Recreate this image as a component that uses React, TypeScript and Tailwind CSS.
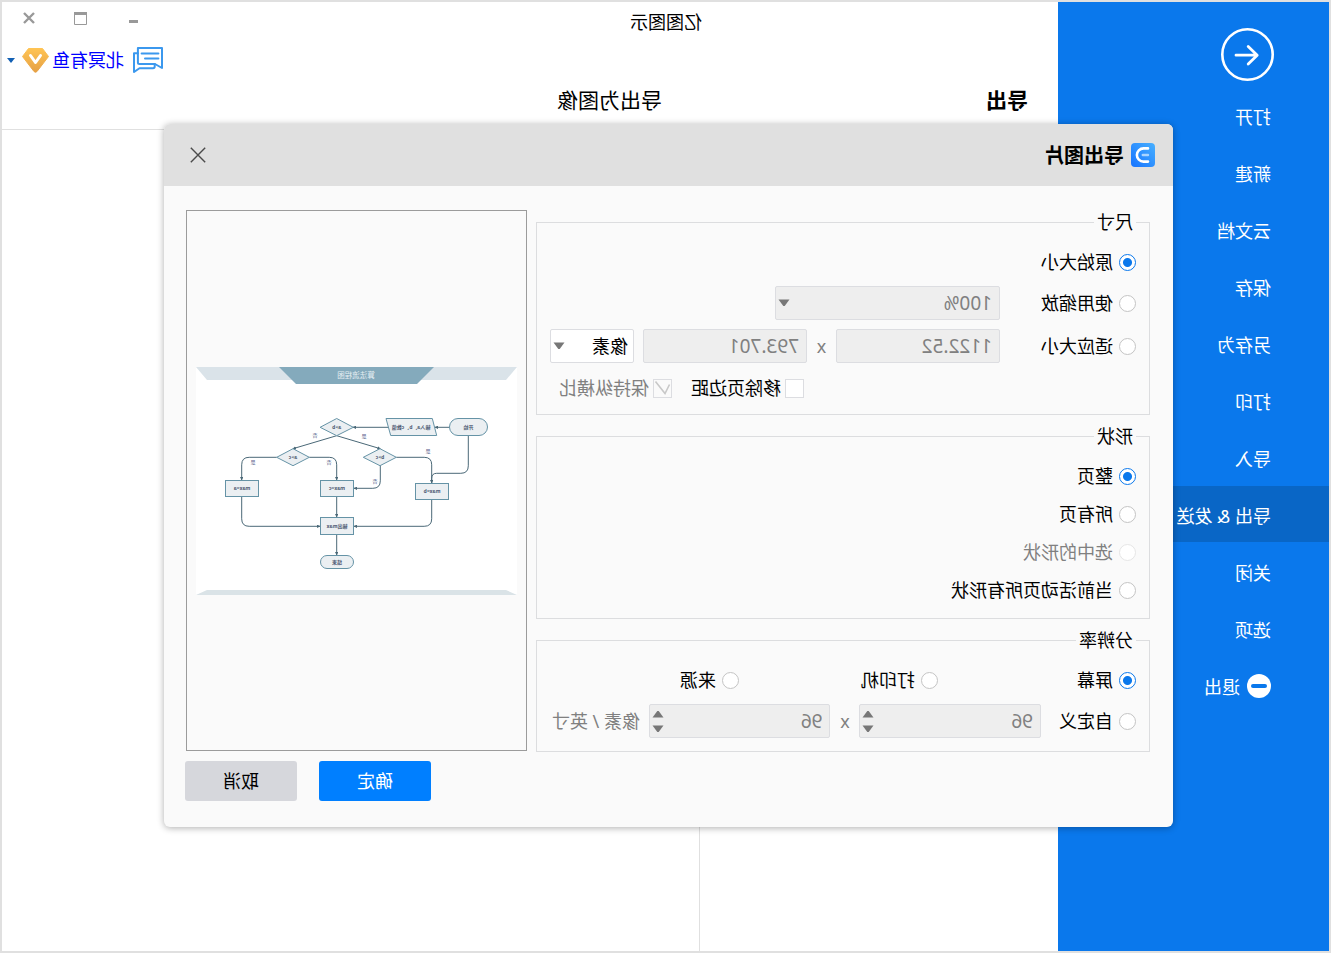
import React from "react";

const menuItems = ["打开", "新建", "云文档", "保存", "另存为", "打印", "导入", "导出 & 发送", "关闭", "选项"];
const activeItem = "导出 & 发送";

const fieldClass =
  "h-[34px] w-full min-w-0 appearance-none rounded-[2px] border border-[#dcdde1] bg-white text-black disabled:bg-[#eeeeee] disabled:text-[#808080] disabled:opacity-100";

function Triangle({ up = false }: { up?: boolean }) {
  return (
    <svg width="12" height="8" viewBox="0 0 12 8" aria-hidden="true">
      <path d={up ? "M0.5 7.5 5.3 0.9h1.4l4.8 6.6z" : "M0.5 0.5h11L6.7 7.1H5.3z"} fill="#777777" />
    </svg>
  );
}

type RadioProps = { name: string; label: string; checked?: boolean; disabled?: boolean };

function Radio({ name, label, checked, disabled }: RadioProps) {
  return (
    <label className={disabled ? "flex items-center gap-[6px] text-[#808080]" : "flex items-center gap-[6px]"}>
      <input
        type="radio"
        name={name}
        defaultChecked={checked}
        disabled={disabled}
        className="size-[17px] shrink-0 appearance-none rounded-full border border-[#c4c4c4] bg-white checked:border-[#0a78ec] checked:bg-[radial-gradient(circle,#0a78ec_4px,#ffffff_5px)] disabled:border-[#e6e6e6]"
      />
      <span className="whitespace-nowrap">{label}</span>
    </label>
  );
}

function Checkbox({ label, checked, disabled }: { label: string; checked?: boolean; disabled?: boolean }) {
  return (
    <label className={disabled ? "flex items-center gap-1 text-[#808080]" : "flex items-center gap-1"}>
      <span className="relative flex">
        <input
          type="checkbox"
          defaultChecked={checked}
          disabled={disabled}
          className="size-[19px] appearance-none border border-[#dcdde1] bg-white disabled:bg-[#fafafa]"
        />
        {checked && (
          <svg className="absolute inset-0" width="19" height="19" viewBox="0 0 19 19" aria-hidden="true">
            <path d="M2.5 5.5 7 14.5 16.5 2.5" fill="none" stroke="#c8c8c8" strokeWidth="1.6" />
          </svg>
        )}
      </span>
      <span className="whitespace-nowrap">{label}</span>
    </label>
  );
}

function Select({ label, value, disabled, className }: { label: string; value: string; disabled?: boolean; className: string }) {
  return (
    <div className="relative">
      <select aria-label={label} disabled={disabled} defaultValue={value} className={`${fieldClass} ${className}`}>
        <option>{value}</option>
      </select>
      <span className="pointer-events-none absolute inset-y-0 right-[3px] flex items-center">
        <Triangle />
      </span>
    </div>
  );
}

function Spinner({ label, value }: { label: string; value: string }) {
  return (
    <div className="relative min-w-0 flex-1">
      <input aria-label={label} disabled defaultValue={value} className={`${fieldClass} px-[7px] text-[19px]`} />
      <span className="absolute inset-y-0 right-[3px] flex flex-col items-center justify-center gap-[7px]">
        <button type="button" disabled aria-label="增加" className="flex">
          <Triangle up />
        </button>
        <button type="button" disabled aria-label="减少" className="flex">
          <Triangle />
        </button>
      </span>
    </div>
  );
}

function Group({ title, className, children }: { title: string; className: string; children: React.ReactNode }) {
  return (
    <fieldset className={`min-w-0 border border-[#dcdddf] px-[13px] ${className}`}>
      <legend className="h-[25px] px-[3px] leading-6">{title}</legend>
      {children}
    </fieldset>
  );
}

function Flowchart() {
  return (
    <svg viewBox="0 0 321 228" className="w-[321px] max-w-full" role="img" aria-label="算法流程图">
      <defs>
        <marker id="tip" viewBox="0 0 4 4" refX="3.5" refY="2" markerWidth="3.4" markerHeight="3.4" markerUnits="userSpaceOnUse" orient="auto">
          <path d="M0 0 4 2 0 4z" fill="#4a6877" />
        </marker>
      </defs>
      <rect width="321" height="228" fill="#ffffff" />
      <path d="M0 0H321L310 13H11z" fill="#dae3e9" />
      <path d="M83 0H238L221 17H100z" fill="#84aabc" />
      <path d="M11 223H310L321 228H0z" fill="#dae3e7" />
      <g fill="none" stroke="#4a6877" strokeWidth="1">
        <path d="M67.7 60.3H82" markerEnd="url(#tip)" />
        <path d="M128.7 60.3H164" markerEnd="url(#tip)" />
        <path d="M180.3 68.7 224 81.7" markerEnd="url(#tip)" />
        <path d="M180.3 68.7 136.7 81.7" markerEnd="url(#tip)" />
        <path d="M240.3 90.3H267.8Q275.3 90.3 275.3 97.8V113" markerEnd="url(#tip)" />
        <path d="M207.7 90.3H187.8Q180.3 90.3 180.3 97.8V113" markerEnd="url(#tip)" />
        <path d="M136.7 98.7V113.8Q136.7 121.3 144.2 121.3H163" markerEnd="url(#tip)" />
        <path d="M120.7 90.3H92.8Q85.3 90.3 85.3 97.8V116" markerEnd="url(#tip)" />
        <path d="M48.7 68.7V98.8Q48.7 106.3 56.2 106.3H80.3Q85.3 106.3 85.3 111.3V116" />
        <path d="M85.3 132.3V151.8Q85.3 159.3 92.8 159.3H163" markerEnd="url(#tip)" />
        <path d="M275.3 129.3V151.8Q275.3 159.3 267.8 159.3H197" markerEnd="url(#tip)" />
        <path d="M180.3 129.3V150" markerEnd="url(#tip)" />
        <path d="M180.3 167.3V188" markerEnd="url(#tip)" />
      </g>
      <g fill="#ebeff2" stroke="#6593a6" strokeWidth="1">
        <rect x="29.5" y="51.5" width="38" height="17" rx="8.5" />
        <path d="M84.7 51.5H131L126.3 68.5H80.3z" />
        <path d="M163.7 60.3 180.3 51.5 196.9 60.3 180.3 68.7z" />
        <path d="M207.7 90.3 224 81.7 240.3 90.3 224 98.7z" />
        <path d="M120.7 90.3 137 81.7 153.7 90.3 137 98.7z" />
        <rect x="258.5" y="113.5" width="33" height="16" />
        <rect x="163.5" y="113.5" width="33" height="16" />
        <rect x="68.5" y="116.5" width="33" height="16" />
        <rect x="163.5" y="150.5" width="33" height="17" />
        <rect x="163.5" y="188.5" width="33" height="13" rx="6.5" />
      </g>
      <text x="161" y="11" textAnchor="middle" fontSize="7.5" fill="#e4eef2">算法流程图</text>
      <g fontSize="5" fontWeight="700" textAnchor="middle" fill="#4d5a72">
        <text x="48.5" y="62">开始</text>
        <text x="106" y="62">输入a、b、c数值</text>
        <text x="180.3" y="62">a&gt;b</text>
        <text x="224" y="92">a&gt;c</text>
        <text x="137" y="92">b&gt;c</text>
        <text x="275" y="123">max=a</text>
        <text x="180" y="123">max=c</text>
        <text x="85" y="126">max=b</text>
        <text x="180" y="161">输出max</text>
        <text x="180" y="197">结束</text>
      </g>
      <g fontSize="5" textAnchor="middle" fill="#56608a">
        <text x="202" y="70">否</text>
        <text x="153" y="71">是</text>
        <text x="264" y="97">是</text>
        <text x="188" y="97">否</text>
        <text x="89" y="86">是</text>
        <text x="142" y="116">否</text>
      </g>
    </svg>
  );
}

function ExportDialog() {
  return (
    <div
      role="dialog"
      aria-label="导出图片"
      className="w-full max-w-[1009px] overflow-hidden rounded-[6px] bg-[#fafafa] shadow-[0_1px_7px_rgba(0,0,0,0.32)]"
    >
      <header className="flex h-[62px] items-center gap-[7px] bg-[#e0e0e0] pl-[18px] pr-6">
        <svg width="24" height="24" viewBox="0 0 24 24" aria-hidden="true">
          <defs>
            <linearGradient id="tile" x1="0" y1="0" x2="1" y2="1">
              <stop offset="0" stopColor="#48b0ff" />
              <stop offset="1" stopColor="#1673ff" />
            </linearGradient>
          </defs>
          <rect width="24" height="24" rx="4" fill="url(#tile)" />
          <path d="M7 12H12.2" stroke="#a9d4ff" strokeWidth="2.4" strokeLinecap="round" />
          <path d="M7 5.4H11.5A6.6 6.6 0 0 1 11.5 18.6H7" fill="none" stroke="#ffffff" strokeWidth="2.6" strokeLinecap="round" />
        </svg>
        <h2 className="flex-1 pt-[2px] text-[20px] leading-7 font-bold">导出图片</h2>
        <button type="button" aria-label="关闭对话框" className="flex size-5 items-center justify-center">
          <svg width="16" height="16" viewBox="0 0 16 16" aria-hidden="true">
            <path d="M0.8 0.8 15.2 15.2M15.2 0.8 0.8 15.2" stroke="#4a4a4a" strokeWidth="1.4" />
          </svg>
        </button>
      </header>

      <div className="flex gap-[9px] pt-6 pr-[22px] pl-[23px]">
        <div className="flex min-w-0 flex-1 flex-col gap-[9px]">
          <Group title="尺寸" className="pt-[11px] pb-[14px]">
            <div className="flex h-8 items-center">
              <Radio name="size" label="原始大小" checked />
            </div>
            <div className="mt-2 flex items-center">
              <div className="w-[136px]">
                <Radio name="size" label="使用缩放" />
              </div>
              <div className="w-[225px]">
                <Select label="缩放比例" value="100%" disabled className="px-[7px] text-[19px]" />
              </div>
            </div>
            <div className="mt-[9px] flex items-center">
              <div className="w-[136px] shrink-0">
                <Radio name="size" label="适应大小" />
              </div>
              <input aria-label="宽度" disabled defaultValue="1122.52" className={`${fieldClass} flex-1 px-[7px] text-[19px]`} />
              <span className="w-[29px] shrink-0 text-center text-[#808080]">x</span>
              <input aria-label="高度" disabled defaultValue="793.701" className={`${fieldClass} flex-1 px-[7px] text-[19px]`} />
              <div className="ml-[9px] w-[84px] shrink-0">
                <Select label="单位" value="像素" className="px-[5px] text-[18px]" />
              </div>
            </div>
            <div className="mt-[13px] flex h-6 items-center justify-end gap-[19px] pr-[9px]">
              <Checkbox label="移除页边距" />
              <Checkbox label="保持纵横比" checked disabled />
            </div>
          </Group>

          <Group title="形状" className="pt-2 pb-[9px]">
            <div className="flex h-[38px] items-center">
              <Radio name="shape" label="整页" checked />
            </div>
            <div className="flex h-[38px] items-center">
              <Radio name="shape" label="所有页" />
            </div>
            <div className="flex h-[38px] items-center">
              <Radio name="shape" label="选中的形状" disabled />
            </div>
            <div className="flex h-[38px] items-center">
              <Radio name="shape" label="当前活动页所有形状" />
            </div>
          </Group>

          <Group title="分辨率" className="pt-[11px] pb-[13px]">
            <div className="grid h-8 grid-cols-[198px_199px_1fr] items-center">
              <Radio name="resolution" label="屏幕" checked />
              <Radio name="resolution" label="打印机" />
              <Radio name="resolution" label="来源" />
            </div>
            <div className="mt-2 flex items-center">
              <div className="w-[95px] shrink-0">
                <Radio name="resolution" label="自定义" />
              </div>
              <Spinner label="水平分辨率" value="96" />
              <span className="w-[29px] shrink-0 text-center text-[#808080]">x</span>
              <Spinner label="垂直分辨率" value="96" />
              <span className="ml-[9px] w-[90px] shrink-0 whitespace-nowrap text-[#808080]">像素 / 英寸</span>
            </div>
          </Group>
        </div>

        <div className="mb-px flex w-[341px] shrink-0 items-center justify-center border border-[#9b9b9b]">
          <Flowchart />
        </div>
      </div>

      <div className="flex justify-end gap-[22px] pt-[9px] pr-[21px] pb-[26px]">
        <button type="button" className="h-10 w-28 rounded-[3px] bg-[#007fff] text-white">
          确定
        </button>
        <button type="button" className="h-10 w-28 rounded-[3px] bg-[#d6d7dc]">
          取消
        </button>
      </div>
    </div>
  );
}

function Sidebar() {
  return (
    <nav className="w-[271px] shrink-0 bg-[#0a78ec] pt-[26px] text-white">
      <button type="button" aria-label="返回" className="ml-[55px] flex">
        <svg width="53" height="53" viewBox="0 0 53 53" fill="none" stroke="#ffffff" strokeLinecap="round" aria-hidden="true">
          <circle cx="26.5" cy="26.5" r="25.2" strokeWidth="2.6" />
          <path d="M38 27.2H17M25.8 18.5 16.8 27.2 25.8 36" strokeWidth="2.8" strokeLinejoin="round" />
        </svg>
      </button>
      <ul className="mt-[6px] flex flex-col gap-px">
        {menuItems.map((item) => (
          <li key={item}>
            <a
              href="#"
              className={
                item === activeItem
                  ? "flex h-14 items-center bg-[#0966c6] pt-[3px] pl-[58px]"
                  : "flex h-14 items-center pt-[3px] pl-[58px]"
              }
            >
              {item}
            </a>
          </li>
        ))}
        <li>
          <a href="#" className="flex h-14 items-center gap-[7px] pt-[2px] pl-[58px]">
            <svg width="24" height="24" viewBox="0 0 24 24" aria-hidden="true">
              <circle cx="12" cy="12" r="12" fill="#ffffff" />
              <rect x="4" y="10" width="16" height="4" rx="2" fill="#0a78ec" />
            </svg>
            <span className="pt-px">退出</span>
          </a>
        </li>
      </ul>
    </nav>
  );
}

function WindowBar() {
  return (
    <div className="flex h-10 justify-between">
      <h1 className="pl-[356px] leading-10">亿图图示</h1>
      <div className="flex h-8 pr-px">
        <button type="button" aria-label="最小化" className="flex w-[52px] items-center justify-center">
          <svg width="10" height="10" viewBox="0 0 10 10" aria-hidden="true">
            <rect x="0" y="7" width="9" height="3" fill="#999999" />
          </svg>
        </button>
        <button type="button" aria-label="最大化" className="flex w-[52px] items-center justify-center">
          <svg width="13" height="13" viewBox="0 0 13 13" aria-hidden="true">
            <path d="M0.5 0.5H12.5V12.5H0.5z" fill="none" stroke="#999999" />
            <rect width="13" height="3" fill="#999999" />
          </svg>
        </button>
        <button type="button" aria-label="关闭" className="flex w-[52px] items-center justify-center">
          <svg width="12" height="12" viewBox="0 0 12 12" aria-hidden="true">
            <path d="M1 1 11 11M11 1 1 11" stroke="#999999" strokeWidth="2.4" />
          </svg>
        </button>
      </div>
    </div>
  );
}

function AccountBar() {
  return (
    <div className="flex h-9 items-center justify-end pr-[5px]">
      <button type="button" aria-label="消息" className="flex">
        <svg width="30" height="26" viewBox="0 0 30 26" fill="none" stroke="#3b98ee" strokeWidth="2" strokeLinejoin="round" strokeLinecap="round" aria-hidden="true">
          <path d="M25.1 1H1V21L8 17H23.6Q25.1 17 25.1 15.5z" />
          <path d="M25.1 6.3H29V25L23.5 21.2H10Q8.3 21.2 8.3 19.5V17" />
          <path d="M4.6 6.6H21.4M4.6 11.5H18" />
        </svg>
      </button>
      <a href="#" className="ml-[9px] text-[#0000ff]">
        北冥有鱼
      </a>
      <svg className="ml-[3px]" width="27" height="25" viewBox="0 0 27 25" aria-hidden="true">
        <defs>
          <linearGradient id="gem" x1="0" y1="0" x2="0" y2="1">
            <stop offset="0" stopColor="#ffc454" />
            <stop offset="1" stopColor="#e5a044" />
          </linearGradient>
        </defs>
        <path d="M6.5 0.5H20.5L26.5 8.5 15 23.5Q13.5 25 12 23.5L0.5 8.5z" fill="url(#gem)" stroke="url(#gem)" strokeLinejoin="round" />
        <path d="M8.5 7.5 13.5 14.5 18.5 7.5" fill="none" stroke="#ffffff" strokeWidth="3" strokeLinecap="round" strokeLinejoin="round" />
      </svg>
      <button type="button" aria-label="账户菜单" className="ml-[7px] flex">
        <svg width="8" height="5" viewBox="0 0 8 5" aria-hidden="true">
          <path d="M0 0H8L4 5z" fill="#1260b4" />
        </svg>
      </button>
    </div>
  );
}

export default function App() {
  return (
    <div className="relative flex min-h-screen -scale-x-100 border-2 border-[#e0e0e0] bg-white font-['Noto_Sans','Noto_Sans_CJK_SC',sans-serif] text-[18px] leading-6 text-black">
      <Sidebar />
      <main className="flex min-w-0 flex-1 flex-col">
        <WindowBar />
        <AccountBar />
        <div className="flex h-[52px] items-center border-b border-[#e0e0e0] pb-2 text-[21px]">
          <h2 className="w-[359px] pl-[30px] font-bold">导出</h2>
          <h3 className="flex-1 pl-[37px]">导出为图像</h3>
        </div>
        <div className="w-[359px] flex-1 border-r border-[#e0e0e0]" />
      </main>
      <div className="absolute inset-0 flex items-center justify-center pr-[6px] pb-[2px]">
        <ExportDialog />
      </div>
    </div>
  );
}
